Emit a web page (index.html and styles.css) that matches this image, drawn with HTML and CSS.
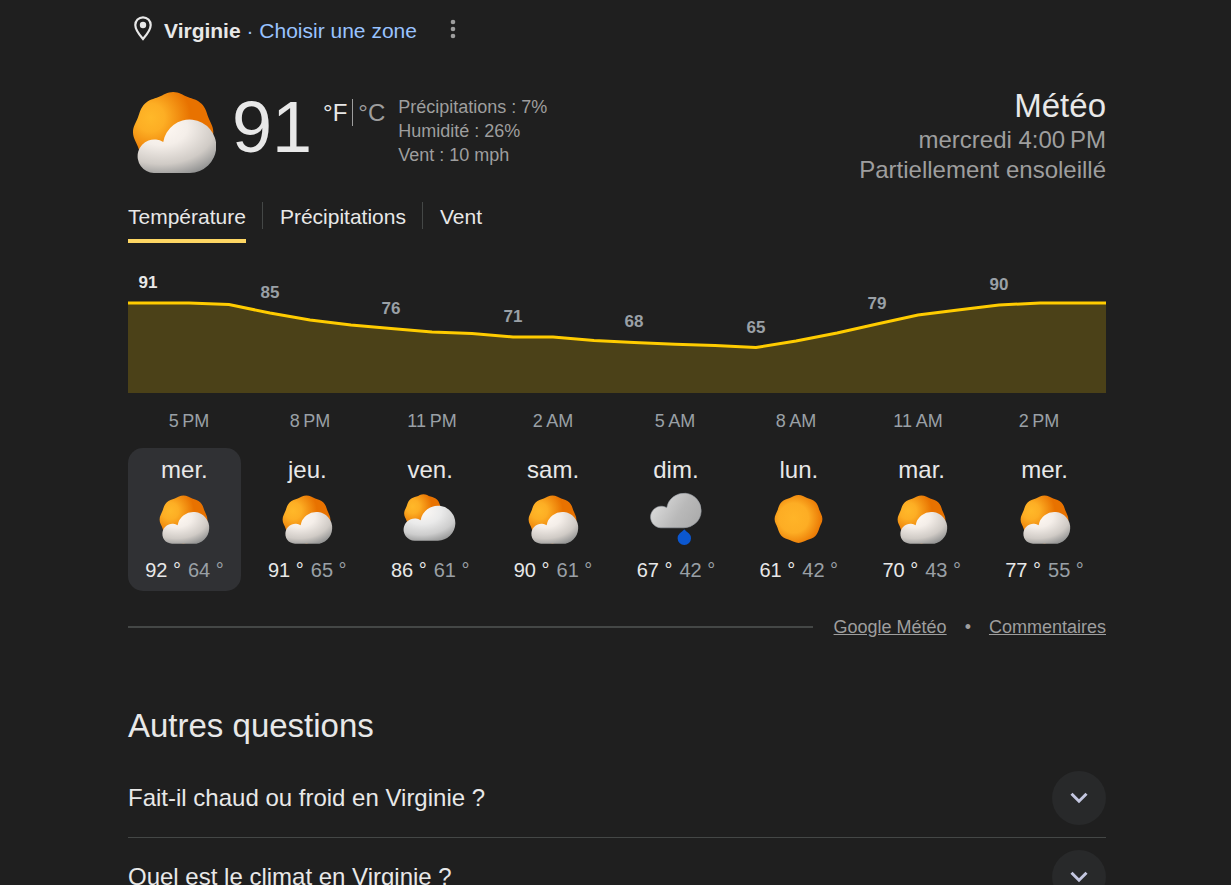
FILE: index.html
```html
<!DOCTYPE html>
<html lang="fr">
<head>
  <meta charset="UTF-8" />
  <title>Météo - Virginie</title>
  <link rel="stylesheet" href="styles.css">
</head>
<body>
  <!-- Weather icons -->
  <svg class="sprite" width="0" height="0" aria-hidden="true">
    <defs>
      <radialGradient id="sun-side" cx="0.22" cy="0.32" r="0.5">
        <stop offset="0" stop-color="#ffb829" />
        <stop offset="0.35" stop-color="#fdae24" />
        <stop offset="1" stop-color="#e87200" />
      </radialGradient>
      <radialGradient id="sun-full" cx="0.4" cy="0.48" r="0.62">
        <stop offset="0" stop-color="#ffb428" />
        <stop offset="0.5" stop-color="#fdad24" />
        <stop offset="1" stop-color="#e87200" />
      </radialGradient>
      <radialGradient id="cloud-warm" cx="0.3" cy="0.15" r="0.95">
        <stop offset="0" stop-color="#fff9f3" />
        <stop offset="0.35" stop-color="#f4eee9" />
        <stop offset="0.72" stop-color="#d0cbc6" />
        <stop offset="1" stop-color="#8f9090" />
      </radialGradient>
      <radialGradient id="cloud-white" cx="0.35" cy="0.15" r="0.95">
        <stop offset="0" stop-color="#fdf9f6" />
        <stop offset="0.4" stop-color="#eaeaea" />
        <stop offset="0.72" stop-color="#cdcdcd" />
        <stop offset="1" stop-color="#8f9090" />
      </radialGradient>
      <linearGradient id="cloud-grey" x1="0" y1="0.4" x2="0.9" y2="0.8">
        <stop offset="0" stop-color="#dcdcdc" />
        <stop offset="0.6" stop-color="#b9b9b9" />
        <stop offset="1" stop-color="#adadad" />
      </linearGradient>
      <path id="sun-shape" d="M0 -23.9C3.4 -23.9 5.76 -22.03 8.69 -20.97C11.62 -19.91 14.5 -19.3 16.9 -16.9C19.3 -14.5 19.91 -11.62 20.97 -8.69C22.03 -5.76 23.9 -3.4 23.9 0C23.9 3.4 22.03 5.76 20.97 8.69C19.91 11.62 19.3 14.5 16.9 16.9C14.5 19.3 11.62 19.91 8.69 20.97C5.76 22.03 3.4 23.9 0 23.9C-3.4 23.9 -5.76 22.03 -8.69 20.97C-11.62 19.91 -14.5 19.3 -16.9 16.9C-19.3 14.5 -19.91 11.62 -20.97 8.69C-22.03 5.76 -23.9 3.4 -23.9 0C-23.9 -3.4 -22.03 -5.76 -20.97 -8.69C-19.91 -11.62 -19.3 -14.5 -16.9 -16.9C-14.5 -19.3 -11.62 -19.91 -8.69 -20.97C-5.76 -22.03 -3.4 -23.9 0 -23.9Z" />
      <g id="partly-sunny">
        <use href="#sun-shape" transform="translate(29.5 29.5)" fill="url(#sun-side)" />
        <path fill="url(#cloud-warm)" d="M18 53.8A10 10 0 1 1 23.6 35.3A15.9 15.9 0 1 1 39.4 53.8Z" />
      </g>
      <g id="partly-cloudy">
        <use href="#sun-shape" transform="translate(23.5 23.5) scale(0.81)" fill="url(#sun-side)" />
        <path fill="url(#cloud-white)" d="M14.6 50.7A11.1 11.1 0 1 1 20.6 30.2A17.5 17.5 0 1 1 38 50.7Z" />
      </g>
      <g id="rain">
        <path fill="url(#cloud-grey)" stroke="#9aa0a6" stroke-width="0.6" d="M14.6 37.8A10.8 10.8 0 1 1 20.8 17.7A17.3 17.3 0 1 1 37.8 37.8Z" />
        <path fill="#0b57d0" d="M38.3 39.6C38.3 39.6 40.6 41.8 43 43.6A6.7 6.7 0 1 1 33.6 43.6C36 41.8 38.3 39.6 38.3 39.6Z" />
      </g>
      <g id="sunny">
        <use href="#sun-shape" transform="translate(29.5 29)" fill="url(#sun-full)" />
      </g>
    </defs>
  </svg>

  <main class="page">
    <div class="location">
      <svg class="pin" viewBox="0 0 18 25" aria-hidden="true">
        <path d="M9 1.3C4.7 1.3 1.3 4.7 1.3 9C1.3 14.2 9 23 9 23S16.7 14.2 16.7 9C16.7 4.7 13.3 1.3 9 1.3Z" fill="none" stroke="#e8e8e8" stroke-width="2.2" />
        <circle cx="9" cy="9" r="3.2" fill="#e8e8e8" />
      </svg>
      <p class="place"><strong>Virginie</strong> <span class="dot">·</span> <a href="#">Choisir une zone</a></p>
      <button class="more" aria-label="Plus d'options">
        <svg viewBox="0 0 6 20" width="6" height="20">
          <circle cx="3" cy="3" r="2.3" />
          <circle cx="3" cy="10" r="2.3" />
          <circle cx="3" cy="17" r="2.3" />
        </svg>
      </button>
    </div>

    <section class="current">
      <svg class="current-icon" viewBox="5 5 50 50" aria-hidden="true"><use href="#partly-sunny" /></svg>
      <div class="degrees">91</div>
      <div class="units">
        <button class="unit unit-on">°F</button>
        <button class="unit">°C</button>
      </div>
      <div class="details">
        <div>Précipitations : 7%</div>
        <div>Humidité : 26%</div>
        <div>Vent : 10 mph</div>
      </div>
      <div class="summary">
        <h1>Météo</h1>
        <div>mercredi 4:00&#8239;PM</div>
        <div>Partiellement ensoleillé</div>
      </div>
    </section>

    <div class="tabs" role="tablist">
      <button class="tab tab-on" role="tab" aria-selected="true">Température</button>
      <button class="tab" role="tab" aria-selected="false">Précipitations</button>
      <button class="tab" role="tab" aria-selected="false">Vent</button>
    </div>

    <svg class="chart" viewBox="0 0 978 168">
      <polygon class="chart-area" points="0,38 61,38 101,39.5 142,48 182,55 223,60 263,63.5 304,67 344,68.5 385,72 425,72 466,75.5 506,77.5 547,79.3 587,80.5 628,82.5 668,76 709,68 749,59 790,50 830,45 871,40 912,38 978,38 978,128 0,128" />
      <polyline class="chart-line" points="0,38 61,38 101,39.5 142,48 182,55 223,60 263,63.5 304,67 344,68.5 385,72 425,72 466,75.5 506,77.5 547,79.3 587,80.5 628,82.5 668,76 709,68 749,59 790,50 830,45 871,40 912,38 978,38" />
      <g class="chart-value">
        <text class="chart-now" x="20" y="23">91</text>
        <text x="142" y="33">85</text>
        <text x="263" y="49">76</text>
        <text x="385" y="57">71</text>
        <text x="506" y="62">68</text>
        <text x="628" y="68">65</text>
        <text x="749" y="44">79</text>
        <text x="871" y="25">90</text>
      </g>
      <g class="chart-hour">
        <text x="61" y="162">5&#8239;PM</text>
        <text x="182" y="162">8&#8239;PM</text>
        <text x="304" y="162">11&#8239;PM</text>
        <text x="425" y="162">2&#8239;AM</text>
        <text x="547" y="162">5&#8239;AM</text>
        <text x="668" y="162">8&#8239;AM</text>
        <text x="790" y="162">11&#8239;AM</text>
        <text x="911" y="162">2&#8239;PM</text>
      </g>
    </svg>

    <div class="days">
      <div class="day day-on">
        <div class="day-name">mer.</div>
        <svg class="day-icon" viewBox="0 0 60 60"><use href="#partly-sunny" /></svg>
        <div class="day-temps"><span>92 °</span><span class="low">64 °</span></div>
      </div>
      <div class="day">
        <div class="day-name">jeu.</div>
        <svg class="day-icon" viewBox="0 0 60 60"><use href="#partly-sunny" /></svg>
        <div class="day-temps"><span>91 °</span><span class="low">65 °</span></div>
      </div>
      <div class="day">
        <div class="day-name">ven.</div>
        <svg class="day-icon" viewBox="0 0 60 60"><use href="#partly-cloudy" /></svg>
        <div class="day-temps"><span>86 °</span><span class="low">61 °</span></div>
      </div>
      <div class="day">
        <div class="day-name">sam.</div>
        <svg class="day-icon" viewBox="0 0 60 60"><use href="#partly-sunny" /></svg>
        <div class="day-temps"><span>90 °</span><span class="low">61 °</span></div>
      </div>
      <div class="day">
        <div class="day-name">dim.</div>
        <svg class="day-icon" viewBox="0 0 60 60"><use href="#rain" /></svg>
        <div class="day-temps"><span>67 °</span><span class="low">42 °</span></div>
      </div>
      <div class="day">
        <div class="day-name">lun.</div>
        <svg class="day-icon" viewBox="0 0 60 60"><use href="#sunny" /></svg>
        <div class="day-temps"><span>61 °</span><span class="low">42 °</span></div>
      </div>
      <div class="day">
        <div class="day-name">mar.</div>
        <svg class="day-icon" viewBox="0 0 60 60"><use href="#partly-sunny" /></svg>
        <div class="day-temps"><span>70 °</span><span class="low">43 °</span></div>
      </div>
      <div class="day">
        <div class="day-name">mer.</div>
        <svg class="day-icon" viewBox="0 0 60 60"><use href="#partly-sunny" /></svg>
        <div class="day-temps"><span>77 °</span><span class="low">55 °</span></div>
      </div>
    </div>

    <div class="sources">
      <a href="#">Google Météo</a>
      <span>•</span>
      <a href="#">Commentaires</a>
    </div>

    <section class="questions">
      <h2>Autres questions</h2>
      <div class="question">
        <span id="q1">Fait-il chaud ou froid en Virginie ?</span>
        <button class="expand" aria-labelledby="q1">
          <svg viewBox="0 0 18 12" width="18" height="12"><path d="M1.5 1.7L9 9.2L16.5 1.7" /></svg>
        </button>
      </div>
      <div class="question">
        <span id="q2">Quel est le climat en Virginie ?</span>
        <button class="expand" aria-labelledby="q2">
          <svg viewBox="0 0 18 12" width="18" height="12"><path d="M1.5 1.7L9 9.2L16.5 1.7" /></svg>
        </button>
      </div>
    </section>
  </main>
</body>
</html>
```
FILE: styles.css
```css
* {
  box-sizing: border-box;
}
body {
  margin: 0;
  background: #1f1f1f;
  color: #e8e8e8;
  font-family: "Liberation Sans", Arial, sans-serif;
}
h1, h2, p {
  margin: 0;
  font-weight: normal;
}
button {
  margin: 0;
  padding: 0;
  border: none;
  background: none;
  color: inherit;
  font-family: inherit;
  cursor: pointer;
}
.sprite {
  position: absolute;
}
.page {
  padding: 16px 125px 0 128px;
}

/* location */
.location {
  display: flex;
  align-items: center;
  height: 30px;
  padding-left: 6px;
}
.pin {
  width: 18px;
  height: 25px;
  margin-bottom: 6px;
}
.place {
  margin-left: 12px;
  font-size: 21px;
  line-height: 30px;
}
.place a {
  color: #99c3ff;
  text-decoration: none;
}
.dot {
  color: #99c3ff;
}
.more {
  display: flex;
  margin-left: 33px;
  margin-bottom: 5px;
  fill: #9e9e9e;
}

/* current weather */
.current {
  display: flex;
  align-items: flex-start;
  height: 112px;
  margin-top: 41px;
  padding-left: 4px;
}
.current-icon {
  width: 84px;
  height: 84px;
  margin-top: 4px;
}
.degrees {
  margin-left: 16px;
  font-size: 72px;
  line-height: 80px;
}
.units {
  display: flex;
  margin: 12px 0 0 6px;
}
.unit {
  padding: 0 5px;
  color: #9e9e9e;
  font-size: 24px;
  line-height: 27px;
}
.unit-on {
  border-right: 1px solid #9e9e9e;
  color: #e8e8e8;
}
.details {
  margin: 8px 0 0 8px;
  color: #9e9e9e;
  font-size: 18px;
  line-height: 24px;
}
.summary {
  margin-left: auto;
  color: #9e9e9e;
  font-size: 24px;
  line-height: 30px;
  text-align: right;
}
.summary h1 {
  color: #e8e8e8;
  font-size: 33px;
  line-height: 38px;
}

/* tabs */
.tabs {
  display: flex;
  height: 44px;
}
.tab {
  display: flex;
  height: 100%;
  font-size: 21px;
  line-height: 36px;
}
.tab-on {
  border-bottom: 4px solid #fdd663;
}
.tab + .tab::before {
  content: "";
  height: 27px;
  margin: 3px 17px 0 16px;
  border-left: 1px solid #444746;
}

/* hourly chart */
.chart {
  display: block;
  width: 100%;
  margin-top: 22px;
  text-anchor: middle;
}
.chart-area {
  fill: #fc0;
  fill-opacity: 0.2;
}
.chart-line {
  fill: none;
  stroke: #fc0;
  stroke-width: 3px;
}
.chart-value {
  fill: #9aa0a6;
  font-size: 17px;
  font-weight: bold;
}
.chart-now {
  fill: #e8e8e8;
}
.chart-hour {
  fill: #9aa0a6;
  font-size: 18px;
}

/* daily forecast */
.days {
  display: grid;
  grid-template-columns: repeat(8, 1fr);
  gap: 10px;
  margin-top: 15px;
  padding-right: 5px;
}
.day {
  display: flex;
  flex-direction: column;
  align-items: center;
  height: 143px;
  padding-top: 7px;
  border-radius: 15px;
}
.day-on {
  background: #303134;
}
.day-name {
  font-size: 24px;
  line-height: 30px;
}
.day-icon {
  width: 60px;
  height: 60px;
  margin-top: 5px;
}
.day-temps {
  display: flex;
  gap: 7px;
  margin-top: 5px;
  font-size: 20px;
  line-height: 30px;
}
.low {
  color: #9aa0a6;
}

/* sources */
.sources {
  display: flex;
  align-items: center;
  margin-top: 23px;
  color: #9e9e9e;
  font-size: 18px;
  line-height: 26px;
}
.sources::before {
  content: "";
  flex: 1;
  height: 2px;
  margin-right: 21px;
  background: #444746;
}
.sources a {
  color: inherit;
}
.sources span {
  margin: 0 18px;
}

/* related questions */
.questions {
  padding-bottom: 12px;
}
.questions h2 {
  margin-top: 66px;
  font-size: 33px;
  line-height: 40px;
}
.question {
  display: flex;
  align-items: center;
  justify-content: space-between;
  height: 79px;
  border-bottom: 1px solid #444746;
  font-size: 24px;
}
.questions h2 + .question {
  margin-top: 13px;
}
.expand {
  display: flex;
  align-items: center;
  justify-content: center;
  width: 54px;
  height: 54px;
  border-radius: 50%;
  background: #28292a;
}
.expand path {
  fill: none;
  stroke: #c4c7e0;
  stroke-width: 3px;
}
```
